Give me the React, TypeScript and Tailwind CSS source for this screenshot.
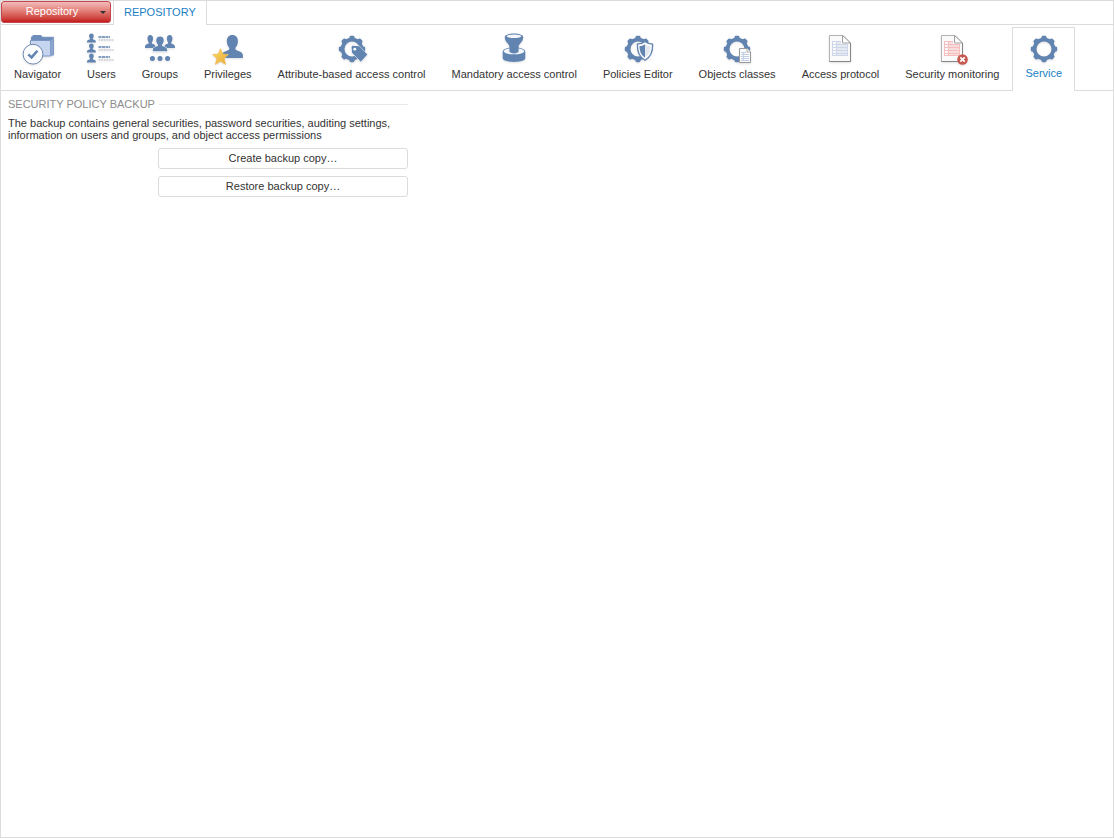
import type { ReactNode } from "react";

type ToolbarItem = {
  label: string;
  icon: ReactNode;
};

const BLUE = "#6284b1";

const Icon = ({ children }: { children: ReactNode }) => (
  <svg
    width="32"
    height="32"
    viewBox="0 0 32 32"
    fill="none"
    aria-hidden="true"
    className="-mx-2 shrink-0 drop-shadow-[0_1px_1px_rgba(0,0,0,0.12)]"
  >
    {children}
  </svg>
);

const Gear = () => (
  <g fill={BLUE}>
    <circle cx="16" cy="16" r="9.4" fill="none" stroke={BLUE} strokeWidth="3.8" />
    {[0, 45, 90, 135, 180, 225, 270, 315].map((angle) => (
      <path
        key={angle}
        d="M12.2 6.2C13.1 5.6 13.3 4.8 13.5 3.9Q13.8 2.8 14.8 2.8H17.2Q18.2 2.8 18.5 3.9C18.7 4.8 18.9 5.6 19.8 6.2Z"
        transform={`rotate(${angle} 16 16)`}
      />
    ))}
  </g>
);

// Head and shoulders in a 16x16 box
const PERSON =
  "M8 0C10.7 0 12.2 1.7 12.2 4.2C12.2 6.2 11.4 7.9 10.3 9V9.8C10.7 11.3 15.5 11 16 14V16H0V14C.5 11 5.3 11.3 5.7 9.8V9C4.6 7.9 3.8 6.2 3.8 4.2C3.8 1.7 5.3 0 8 0Z";

const NavigatorIcon = () => (
  <Icon>
    <path d="M9.5 22V4.2L11 2.5H19L20.5 4.3H31.5V22Z" fill="#6d8dbb" stroke="#7391bd" />
    <path d="M8.5 7.5H28.5V23H8.5Z" fill="#c5d4ef" stroke="#7a97c2" />
    <path d="M28.5 7.5L31.5 4.8V22L28.5 23Z" fill="#8ba5cd" />
    <circle cx="11" cy="21.2" r="9.9" fill="#fbfcfe" stroke="#7088b0" />
    <path d="M6.3 21.4L9.6 24.4L15.4 17.7" stroke={BLUE} strokeWidth="2.5" />
  </Icon>
);

const UsersIcon = () => (
  <Icon>
    {[0, 10, 20].map((y) => (
      <g key={y}>
        <path d={PERSON} fill={BLUE} transform={`translate(2 ${y + 0.6}) scale(.55)`} />
        <path d={`M13.5 ${y + 4}H25`} stroke={BLUE} strokeWidth="1.4" strokeDasharray="3 .5" />
        <path d={`M13.5 ${y + 7}H29`} stroke="#b5bac3" strokeDasharray="2 .6" />
      </g>
    ))}
  </Icon>
);

const GroupsIcon = () => (
  <Icon>
    <path d={PERSON} fill={BLUE} transform="translate(1 2) scale(.66 .82)" />
    <path d={PERSON} fill={BLUE} transform="translate(20.4 2) scale(.66 .82)" />
    <path
      d={PERSON}
      fill={BLUE}
      stroke="#fff"
      strokeWidth="1.2"
      paintOrder="stroke"
      transform="translate(8.8 3.4) scale(.9 .93)"
    />
    <circle cx="8.4" cy="25.5" r="2.5" fill={BLUE} />
    <circle cx="16" cy="25.5" r="2.5" fill={BLUE} />
    <circle cx="23.6" cy="25.5" r="2.5" fill={BLUE} />
  </Icon>
);

const PrivilegesIcon = () => (
  <Icon>
    <defs>
      <linearGradient id="star" x1="0" y1="0" x2="1" y2="1">
        <stop offset="0" stopColor="#ffd968" />
        <stop offset="1" stopColor="#e5a936" />
      </linearGradient>
    </defs>
    <path d={PERSON} fill={BLUE} transform="translate(9.8 2) scale(1.32 1.43)" />
    <path
      d="M8.5 15.6L10.9 21L16.6 21.4L12.2 25.4L13.7 31.4L8.5 28.2L3.3 31.4L4.8 25.4L.4 21.4L6.1 21Z"
      fill="url(#star)"
      stroke="#eebc58"
      strokeWidth=".6"
    />
  </Icon>
);

const AttributeIcon = () => (
  <Icon>
    <Gear />
    <path
      d="M15.6 14.2Q15.6 12.8 17 12.8L23.4 13.2L31.4 21.6L24.8 28.8L16 19.8Z"
      fill={BLUE}
      stroke="#fff"
      strokeWidth="1"
      strokeLinejoin="round"
      paintOrder="stroke"
    />
    <circle cx="18.8" cy="16.2" r="1.4" fill="#fff" />
  </Icon>
);

const MandatoryIcon = () => (
  <Icon>
    <path
      d="M4.7 19C4.7 12.8 27.3 12.8 27.3 19V25C27.3 30.2 4.7 30.2 4.7 25Z"
      fill={BLUE}
    />
    <ellipse cx="16" cy="18.2" rx="10.3" ry="3.1" fill="#f3f6fa" />
    <path
      d="M6.8 4C6.8-.8 25.2-.8 25.2 4C25.2 9.6 20.6 10.6 20.6 14V18.6C20.6 21 11.4 21 11.4 18.6V14C11.4 10.6 6.8 9.6 6.8 4Z"
      fill={BLUE}
    />
    <ellipse cx="16" cy="3.2" rx="7.2" ry="1.8" fill="#f3f6fa" />
  </Icon>
);

const PoliciesIcon = () => (
  <Icon>
    <Gear />
    <path
      d="M23 8.6C25.3 10.5 27.7 11.2 30.6 11.2C30.9 18.4 28.6 24 23 27.2C17.4 24 15.1 18.4 15.4 11.2C18.3 11.2 20.7 10.5 23 8.6Z"
      fill="#fff"
      stroke={BLUE}
      strokeWidth="1.3"
    />
    <path d="M23 11.2V24.8C19.1 22 17.5 18.2 17.4 13.2C19.4 13 21.3 12.4 23 11.2Z" fill={BLUE} />
    <path d="M23 11.2V24.8C26.9 22 28.5 18.2 28.6 13.2C26.6 13 24.7 12.4 23 11.2Z" fill="#e4e8ef" />
  </Icon>
);

const ObjectsIcon = () => (
  <Icon>
    <Gear />
    <path d="M18.5 15.5H26L29.5 19V29.5H18.5Z" fill="#fafbfc" stroke="#999" />
    <path d="M26 15.5V19H29.5" fill="#fff" stroke="#999" strokeWidth=".8" />
    <path
      d="M20 19.5H25M20 21.5H28M20 23.5H28M20 25.5H28M20 27.5H28M22.5 19V28"
      stroke="#c3cfe4"
    />
  </Icon>
);

const DocumentIcon = ({ tint, children }: { tint: string; children?: ReactNode }) => (
  <Icon>
    <path d="M5.5 2.5H19L26.5 10V28.5H5.5Z" fill="#fafafa" stroke="#b4b4b4" />
    <path d="M5.5 28.5H26.5V10" stroke="#858585" />
    <path d="M18.5 2.5V10H26.5Z" fill="#fff" stroke="#959595" strokeWidth=".9" />
    <path
      d="M8 8.5H17M8 11.5H24M8 14.5H24M8 17.5H24M8 20.5H24M8 22.5H24M8.5 8V23M12.5 8V23M23.5 11V23"
      stroke={tint}
    />
    <path d="M13 8.5H17V11H23V23H13Z" fill={tint} opacity=".5" />
    {children}
  </Icon>
);

const MonitoringIcon = () => (
  <DocumentIcon tint="#f6bfbf">
    <circle cx="26.5" cy="26.5" r="5.3" fill="#c6584f" />
    <path d="M24.3 24.3L28.7 28.7M28.7 24.3L24.3 28.7" stroke="#fff" strokeWidth="1.7" />
  </DocumentIcon>
);

const ServiceIcon = () => (
  <Icon>
    <Gear />
  </Icon>
);

const items: ToolbarItem[] = [
  { label: "Navigator", icon: <NavigatorIcon /> },
  { label: "Users", icon: <UsersIcon /> },
  { label: "Groups", icon: <GroupsIcon /> },
  { label: "Privileges", icon: <PrivilegesIcon /> },
  { label: "Attribute-based access control", icon: <AttributeIcon /> },
  { label: "Mandatory access control", icon: <MandatoryIcon /> },
  { label: "Policies Editor", icon: <PoliciesIcon /> },
  { label: "Objects classes", icon: <ObjectsIcon /> },
  { label: "Access protocol", icon: <DocumentIcon tint="#cdd7e9" /> },
  { label: "Security monitoring", icon: <MonitoringIcon /> },
  { label: "Service", icon: <ServiceIcon /> },
];

const ToolbarButton = ({ item, active }: { item: ToolbarItem; active: boolean }) => (
  <button
    type="button"
    className={`flex shrink-0 flex-col items-center border border-b-0 px-3 pt-[5px] whitespace-nowrap ${
      active ? "-mb-px border-[#dcdcdc] bg-white text-[#1a80c4]" : "border-transparent"
    }`}
  >
    {item.icon}
    <span className={active ? "leading-4" : "pt-px leading-4"}>{item.label}</span>
  </button>
);

const App = () => {
  const activeItem = "Service";

  return (
    <div className="flex min-h-screen flex-col border border-[#dcdcdc] bg-white font-['Liberation_Sans',Arial,sans-serif] text-[11px] text-[#333]">
      <header className="flex h-6 border-b border-[#dcdcdc]">
        <button
          type="button"
          className="flex h-[22px] w-[110px] items-center rounded-[3px] border border-[#c4474b] bg-linear-to-b from-[#f2bcbd] to-[#c3151b] pr-1 text-white"
        >
          <span className="flex-1 pb-0.5 pl-0.5 text-center">Repository</span>
          <svg width="6" height="3" viewBox="0 0 6 3" aria-hidden="true">
            <path d="M0 0H6L3 3Z" fill="#333" />
          </svg>
        </button>
        <button
          type="button"
          className="-mb-px ml-0.5 border-x border-[#dcdcdc] bg-white px-2.5 pb-0.5 text-[#1a80c4]"
        >
          REPOSITORY
        </button>
      </header>

      <nav className="flex h-[66px] border-b border-[#dcdcdc] pt-0.5">
        {items.map((item) => (
          <ToolbarButton key={item.label} item={item} active={item.label === activeItem} />
        ))}
      </nav>

      <main className="flex-1 px-[7px] pt-[7px]">
        <section className="w-full max-w-[400px]">
          <div className="flex items-center gap-1">
            <h2 className="leading-3 text-[#8c8c8c]">SECURITY POLICY BACKUP</h2>
            <div className="h-px flex-1 bg-[#eaeaea]" />
          </div>
          <p className="pt-[7px] leading-3">
            The backup contains general securities, password securities, auditing settings,
            information on users and groups, and object access permissions
          </p>
          <div className="flex flex-col items-end gap-[7px] pt-[7px]">
            <button type="button" className="h-[21px] w-[250px] rounded-[3px] border border-[#dcdcdc]">
              Create backup copy…
            </button>
            <button type="button" className="h-[21px] w-[250px] rounded-[3px] border border-[#dcdcdc]">
              Restore backup copy…
            </button>
          </div>
        </section>
      </main>
    </div>
  );
};

export default App;
